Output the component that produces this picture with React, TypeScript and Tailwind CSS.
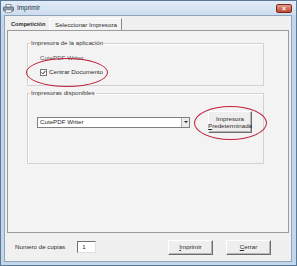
import React from "react";

function PrinterIcon() {
  return (
    <svg width="11" height="9" viewBox="0 0 11 9">
      <rect x="3" y="0.5" width="5" height="3" fill="#fff" stroke="#6a7a8a" strokeWidth="0.8" />
      <rect x="0.5" y="3" width="10" height="4" rx="0.8" fill="#8d9aa8" stroke="#4d5b69" strokeWidth="0.8" />
      <rect x="2.5" y="6" width="6" height="2.5" fill="#fff" stroke="#6a7a8a" strokeWidth="0.6" />
    </svg>
  );
}

function Btn({ children, className }: { children: React.ReactNode; className: string }) {
  return (
    <div
      className={`flex items-center justify-center text-center bg-[#eeeeee] border border-t-white border-l-white border-r-[#6d6d6d] border-b-[#6d6d6d] shadow-[inset_-1px_-1px_0_#b5b5b5] ${className}`}
    >
      {children}
    </div>
  );
}

export default function App() {
  return (
    <div className="w-[297px] h-[266px] bg-[#c4d6ea] border border-[#5b7896] flex flex-col font-['Liberation_Sans',Arial,sans-serif] text-[6.2px] leading-[8px] text-[#2a2a2a] relative overflow-hidden">
      {/* barra de título */}
      <div className="h-[14px] flex items-center pl-[2px] pr-[4px] bg-gradient-to-b from-[#e2ecf7] to-[#cddcee]">
        <PrinterIcon />
        <span className="ml-[3px] text-[#1b2f48] text-[6.4px]">Imprimir</span>
        <div className="ml-auto w-[16px] h-[9px] rounded-[2px] bg-gradient-to-b from-[#e29a8c] to-[#c0442e] border border-[#7e2a1e] flex items-center justify-center text-white text-[7px] font-bold leading-none">
          ×
        </div>
      </div>

      {/* cuerpo */}
      <div className="h-[247px] ml-[3px] mr-[4px] bg-[#f0f0f0] border border-[#8fa4bb] flex flex-col px-[2px] pt-[1px]">
        {/* pestañas */}
        <div className="h-[13px] flex items-end">
          <span className="ml-[4px] mb-[2px] font-bold text-[5.7px]">Competición</span>
          <div className="ml-[4px] w-[73px] h-[12px] flex items-center justify-center bg-[#f4f4f4] border border-t-white border-l-white border-r-[#8a8a8a] border-b-0">
            Seleccionar Impresora
          </div>
        </div>

        {/* panel */}
        <div className="h-[203px] bg-[#f3f3f3] border border-[#9a9a9a] pl-[19px] pr-[24px] pt-[8px]">
          <fieldset className="h-[47px] border border-[#d2d2d2] shadow-[inset_1px_1px_0_#fff]">
            <legend className="ml-[2px] px-[1px] text-[#333]">Impresora de la aplicación</legend>
            <div className="mt-[7px] pl-[12px] text-[#555]">CutePDF Writer</div>
            <div className="mt-[6px] pl-[12px] flex items-center">
              <div className="w-[7px] h-[7px] bg-white border border-[#777] flex items-center justify-center">
                <svg width="5" height="5" viewBox="0 0 5 5">
                  <path d="M0.6 2.4 L2 3.8 L4.4 1" fill="none" stroke="#222" strokeWidth="1" />
                </svg>
              </div>
              <span className="ml-[2px]">Centrar Documento</span>
            </div>
          </fieldset>

          <fieldset className="mt-[3px] h-[75px] border border-[#d2d2d2] shadow-[inset_1px_1px_0_#fff]">
            <legend className="ml-[2px] px-[1px] text-[#333]">Impresoras disponibles</legend>
            <div className="mt-[14px] pl-[9px] flex items-center">
              <div className="w-[153px] h-[11px] bg-white border border-[#7f7f7f] flex items-center pl-[2px]">
                <span className="flex-1">CutePDF Writer</span>
                <div className="w-[8px] h-[9px] bg-[#ececec] border-l border-[#b0b0b0] flex items-center justify-center">
                  <div className="w-0 h-0 border-l-[2px] border-r-[2px] border-t-[2px] border-l-transparent border-r-transparent border-t-[#222]" />
                </div>
              </div>
              <Btn className="ml-[18px] w-[44px] h-[22px] flex-col leading-[7px]">
                <span>Impresora</span>
                <span>
                  <span className="underline">P</span>redeterminada
                </span>
              </Btn>
            </div>
          </fieldset>
        </div>

        {/* fila inferior */}
        <div className="flex-1 flex items-center pl-[8px] pr-[18px]">
          <span>Numero de copias</span>
          <div className="ml-[12px] w-[19px] h-[12px] bg-white border border-t-[#707070] border-l-[#707070] border-r-[#e0e0e0] border-b-[#e0e0e0] pl-[4px] flex items-center">
            1
          </div>
          <Btn className="ml-auto w-[45px] h-[15px]">
            <span>
              <span className="underline">I</span>mprimir
            </span>
          </Btn>
          <Btn className="ml-[13px] w-[45px] h-[15px]">
            <span>
              <span className="underline">C</span>errar
            </span>
          </Btn>
        </div>
      </div>

      {/* anotaciones */}
      <div className="absolute left-[25px] top-[57px] w-[82px] h-[29px] rounded-[50%] border border-[#c0223c] pointer-events-none" />
      <div className="absolute left-[193px] top-[105px] w-[73px] h-[34px] rounded-[50%] border border-[#c0223c] pointer-events-none" />
    </div>
  );
}
